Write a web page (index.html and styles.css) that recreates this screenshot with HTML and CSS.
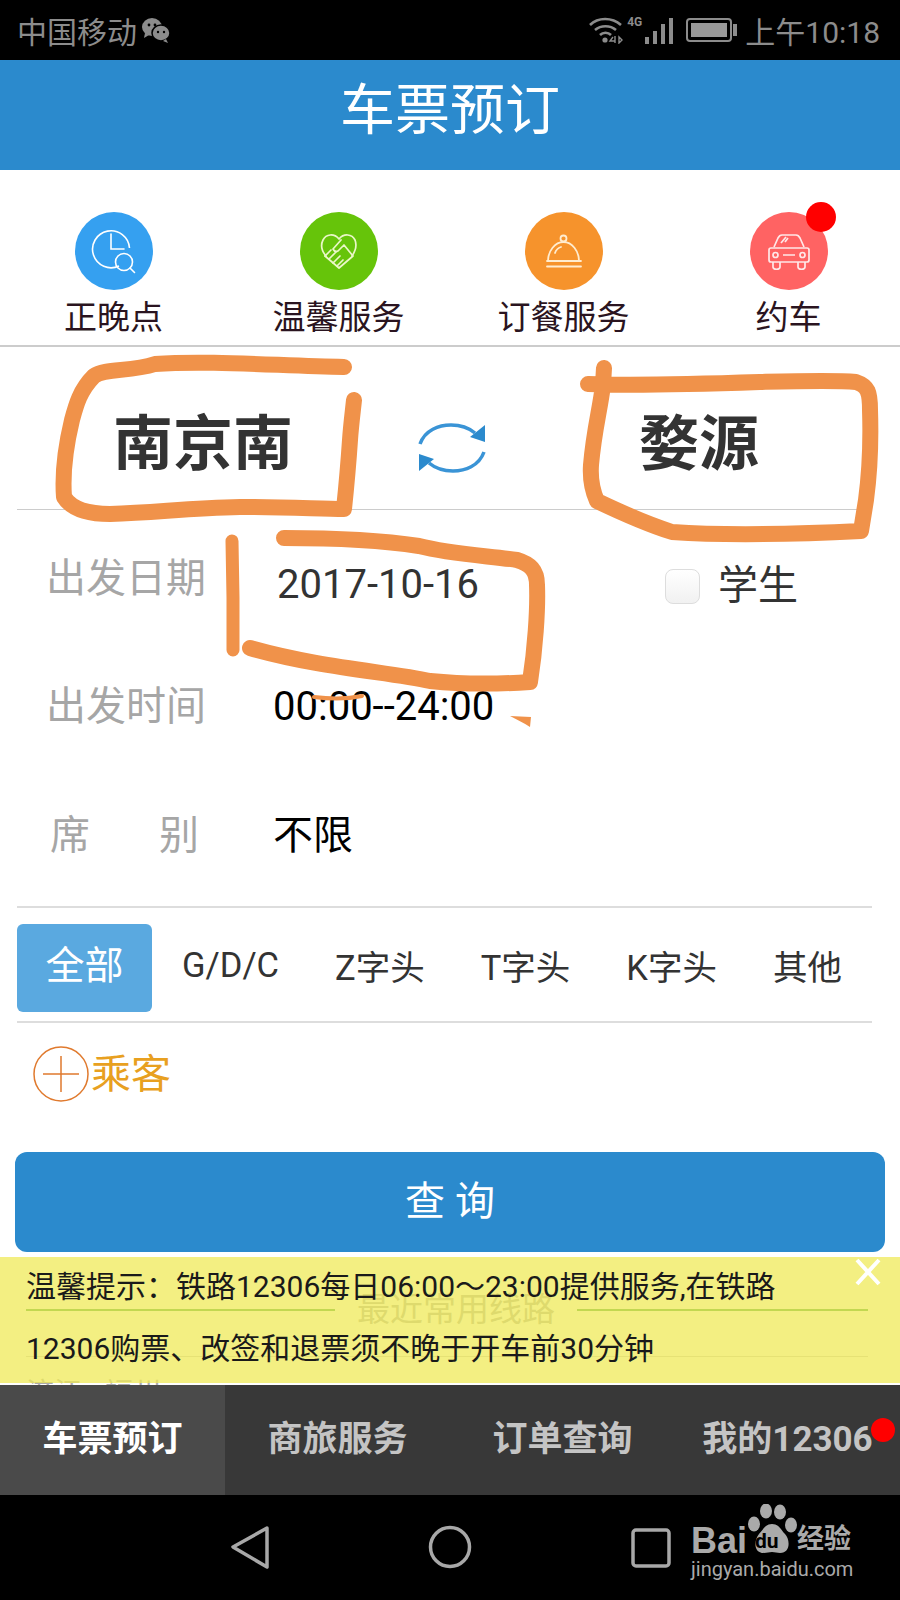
FILE: index.html
```html
<!DOCTYPE html>
<html lang="zh-CN">
<head>
    <meta charset="UTF-8">
    <meta name="viewport" content="width=device-width, initial-scale=1.0">
    <title>车票预订</title>
    <link rel="stylesheet" href="styles.css">
</head>
<body>
<div class="phone">
    <div class="status-bar">
        <div class="status-left">
            <span>中国移动</span>
            <svg class="wechat" width="30" height="26" viewBox="0 0 30 26">
                <ellipse cx="11" cy="10" rx="10" ry="9" fill="#8c8c8c"/>
                <path d="M4 16l-1 5 5-3z" fill="#8c8c8c"/>
                <ellipse cx="20" cy="16" rx="9" ry="8" fill="#8c8c8c" stroke="#000" stroke-width="1.5"/>
                <path d="M25 22l2 4-5-2z" fill="#8c8c8c"/>
                <circle cx="8" cy="8" r="1.4"/><circle cx="14" cy="8" r="1.4"/>
                <circle cx="17" cy="15" r="1.2"/><circle cx="23" cy="15" r="1.2"/>
            </svg>
        </div>
        <div class="status-right">
            <svg width="34" height="28" viewBox="0 0 34 28" fill="none" stroke="#8c8c8c" stroke-width="2.6">
                <path d="M1 9c8-8 22-8 31 0"/>
                <path d="M6 14c6-5 15-5 21 0"/>
                <path d="M11 19c3-3 8-3 11 0"/>
                <circle cx="16" cy="24" r="2.6" fill="#8c8c8c" stroke="none"/>
                <path d="M24 21l-3 4h5M26 20v7M30 21v6l3-3z" stroke-width="1.4"/>
            </svg>
            <div class="signal">
                <span class="signal-4g">4G</span>
                <i class="bar-1"></i><i class="bar-2"></i><i class="bar-3"></i><i class="bar-4"></i>
            </div>
            <div class="battery"><div class="battery-fill"></div></div>
            <span class="clock">上午10:18</span>
        </div>
    </div>

    <header class="title-bar">车票预订</header>

    <div class="content">
        <div class="services">
            <div class="service">
                <div class="service-icon icon-blue">
                    <svg width="78" height="78" viewBox="0 0 78 78" fill="none" stroke="#fff" stroke-width="1.6">
                        <path d="M44 54A18.5 18.5 0 1 1 54.500 36"/>
                        <path d="M36 22v15h13" stroke-linecap="round"/>
                        <circle cx="49" cy="50" r="8.500"/>
                        <path d="M55 56l4.500 4.500" stroke-linecap="round"/>
                    </svg>
                </div>
                <span>正晚点</span>
            </div>
            <div class="service">
                <div class="service-icon icon-green">
                    <svg width="78" height="78" viewBox="0 0 78 78" fill="none" stroke="#eaf7c8" stroke-width="1.7" stroke-linejoin="round" stroke-linecap="round">
                        <path d="M26 44C21 38 21 32 23 28C26 22 34 21 39 27C44 21 52 22 55 28C57 33 56 38 52 44"/>
                        <path d="M25 44l14 12 14-12-9-11-6 6c-2 1-4 0-5-2l8-9"/>
                        <path d="M25 44l6-6M29 47l7-7M33 51l7-7M37 54l6-6"/>
                    </svg>
                </div>
                <span>温馨服务</span>
            </div>
            <div class="service">
                <div class="service-icon icon-orange">
                    <svg width="78" height="78" viewBox="0 0 78 78" fill="none" stroke="#ffeccf" stroke-width="1.8" stroke-linecap="round">
                        <circle cx="38.500" cy="26.500" r="3"/>
                        <path d="M23 49c0-10 7-19 15.500-19S54 39 54 49"/>
                        <path d="M22 49h34M22 54.500h34"/>
                        <path d="M30 41c1-3 3-5 6-6"/>
                    </svg>
                </div>
                <span>订餐服务</span>
            </div>
            <div class="service">
                <div class="service-icon icon-red">
                    <svg width="78" height="78" viewBox="0 0 78 78" fill="none" stroke="#ffe8e8" stroke-width="1.7" stroke-linejoin="round">
                        <path d="M24 35l4-9c1-2 2-3 4-3h14c2 0 3 1 4 3l4 9"/>
                        <path d="M21 36h36c1.500 0 2 1 2 2v10c0 1-1 2-2 2H21c-1 0-2-1-2-2V38c0-1 .500-2 2-2z"/>
                        <path d="M23 50v5c0 3 7 3 7 0v-5M48 50v5c0 3 7 3 7 0v-5"/>
                        <circle cx="25.500" cy="43" r="2.500"/><circle cx="52.500" cy="43" r="2.500"/>
                        <path d="M33 43h12M31 31l5-6M35 30l3-4"/>
                    </svg>
                    <i class="badge badge-car"></i>
                </div>
                <span>约车</span>
            </div>
        </div>

        <div class="route">
            <div class="station station-from">南京南</div>
            <svg class="swap" width="70" height="52" viewBox="0 0 70 52" fill="none" stroke="#3a94d6" stroke-width="3.500">
                <path d="M3 22C8 8 22 3 34 3c11 0 18 3 24 8"/>
                <path d="M68 3v17l-15-5z" fill="#2b8acd" stroke="none"/>
                <path d="M67 30C62 44 48 49 36 49c-11 0-18-3-24-8"/>
                <path d="M2 49V32l15 5z" fill="#2b8acd" stroke="none"/>
            </svg>
            <div class="station station-to">婺源</div>
        </div>

        <div class="form-row row-date">
            <span class="form-label">出发日期</span>
            <span class="date-value">2017-10-16</span>
            <label class="student"><i class="checkbox"></i>学生</label>
        </div>
        <div class="form-row row-time">
            <span class="form-label">出发时间</span>
            <span class="form-value">00:00--24:00</span>
        </div>
        <div class="form-row row-seat">
            <span class="form-label label-spread"><b>席</b><b>别</b></span>
            <span class="form-value">不限</span>
        </div>

        <div class="train-types">
            <span class="type type-active">全部</span>
            <span class="type">G/D/C</span>
            <span class="type">Z字头</span>
            <span class="type">T字头</span>
            <span class="type">K字头</span>
            <span class="type">其他</span>
        </div>

        <div class="passenger">
            <svg width="56" height="56" viewBox="0 0 56 56" fill="none" stroke="#e07a2e" stroke-width="1.500">
                <circle cx="28" cy="28" r="27"/>
                <path d="M10 28h36M28 10v36"/>
            </svg>
            <span>乘客</span>
        </div>

        <button class="search-btn">查 询</button>

        <div class="recent">
            <div class="recent-title"><i></i><span>最近常用线路</span><i></i></div>
            <div class="recent-row"></div>
            <div class="recent-item">济江 福州</div>
        </div>

        <div class="notice">
            <p>温馨提示：铁路12306每日06:00～23:00提供服务,在铁路</p>
            <p>12306购票、改签和退票须不晚于开车前30分钟</p>
            <svg class="notice-close" width="28" height="28" viewBox="0 0 28 28" stroke="#fff" stroke-width="4">
                <path d="M3 2l22 24M25 2L3 26"/>
            </svg>
        </div>

        <!-- hand-drawn marks on top of the form -->
        <svg class="marks" width="900" height="600" viewBox="0 170 900 600" fill="none" stroke="#f0924a" stroke-width="16" stroke-linecap="round" stroke-linejoin="round">
            <path d="M344 367 C280 366 210 360 155 364 C130 372 105 368 94 376 C80 390 76 405 72 420 C66 445 62 470 64 497 C72 510 90 514 110 514 C160 512 190 508 240 507 C290 507 320 509 344 509 C346 490 348 470 350 440 C351 425 353 410 354 400"/>
            <path d="M588 384 C640 386 700 384 760 382 C800 381 835 380 856 382 C868 386 870 392 870 410 C871 440 870 470 866 500 L861 531 C800 534 730 536 672 532 C650 525 620 512 597 501 C592 490 590 480 591 465 C594 430 600 410 603 385 L604 368"/>
            <path d="M232 541 L233 598 L233 650" stroke-width="13"/>
            <path d="M284 538 C330 538 380 540 419 546 C450 554 490 556 517 560 C530 564 537 570 537 585 C538 610 535 650 530 682 C500 684 460 684 430 681 C390 672 320 668 250 648"/>
            <path d="M314 697 C330 699 348 699 362 696" stroke-width="4"/>
            <path d="M510 716 L531 717 L530 727 C524 723 516 719 510 716z" fill="#f0924a" stroke="none"/>
        </svg>
    </div>

    <nav class="tab-bar">
        <a class="tab tab-active">车票预订</a>
        <a class="tab">商旅服务</a>
        <a class="tab">订单查询</a>
        <a class="tab">我的12306<i class="badge badge-tab"></i></a>
    </nav>

    <div class="nav-bar">
        <svg width="900" height="105" viewBox="0 1495 900 105" fill="none" stroke="#a8a8a8" stroke-width="3.500" stroke-linejoin="round">
            <path d="M267 1528 L233 1547 L267 1567z"/>
            <circle cx="450" cy="1547" r="19.500"/>
            <rect x="633" y="1530" width="36" height="36" rx="3"/>
        </svg>
        <div class="baidu-mark">
            <div class="baidu-top">
                <span class="baidu-bai">Bai</span>
                <svg width="50" height="52" viewBox="0 0 50 52" fill="#aaa">
                    <ellipse cx="19" cy="7" rx="6" ry="7.500"/>
                    <ellipse cx="33" cy="8" rx="6" ry="7.500"/>
                    <ellipse cx="7" cy="20" rx="6" ry="7.500"/>
                    <ellipse cx="44" cy="21" rx="6" ry="7.500"/>
                    <path d="M25 20c7 0 9 6 13 10 5 5 6 19-5 19-3 0-5-1-8-1s-5 1-8 1C6 49 7 36 12 30c4-4 6-10 13-10z"/>
                </svg>
                <span class="baidu-du">du</span>
                <span class="baidu-cn">经验</span>
            </div>
            <div class="baidu-url">jingyan.baidu.com</div>
        </div>
    </div>
</div>
</body>
</html>
```

FILE: styles.css
```css
* {
    box-sizing: border-box;
}
body {
    margin: 0;
    font-family: Roboto, "Noto Sans CJK SC", sans-serif;
    background-color: #fff;
}
.phone {
    position: relative;
    display: flex;
    flex-direction: column;
    width: 900px;
    height: 1600px;
    overflow: hidden;
}

/* status bar */
.status-bar {
    display: flex;
    align-items: center;
    justify-content: space-between;
    height: 60px;
    padding: 0 20px 0 17px;
    background-color: #000;
    color: #8c8c8c;
    font-size: 30px;
}
.status-left, .status-right {
    display: flex;
    align-items: center;
}
.wechat {
    margin-left: 4px;
}
.signal {
    display: flex;
    align-items: flex-end;
    gap: 4px;
    height: 28px;
    margin-left: 4px;
}
.signal i {
    width: 4px;
    background-color: #8c8c8c;
}
.signal-4g {
    align-self: flex-start;
    margin-right: -1px;
    font-size: 12px;
    font-weight: 700;
    line-height: 12px;
}
.bar-1 { height: 7px; }
.bar-2 { height: 13px; }
.bar-3 { height: 20px; }
.bar-4 { height: 26px; }
.battery {
    position: relative;
    width: 46px;
    height: 24px;
    margin-left: 13px;
    padding: 3px;
    border: 2px solid #8c8c8c;
    border-radius: 4px;
}
.battery::after {
    content: "";
    position: absolute;
    top: 4px;
    right: -7px;
    width: 4px;
    height: 12px;
    background-color: #8c8c8c;
}
.battery-fill {
    width: 36px;
    height: 14px;
    background-color: #999;
}
.clock {
    margin-left: 13px;
}

.title-bar {
    height: 110px;
    background-color: #2b8acd;
    color: #fff;
    font-size: 55px;
    line-height: 100px;
    text-align: center;
}

.content {
    position: relative;
    flex: 1;
    overflow: hidden;
}

/* shortcuts row */
.services {
    display: grid;
    grid-template-columns: repeat(4, 225px);
    height: 177px;
    padding: 42px 0 0 1px;
    border-bottom: 2px solid #ccc;
}
.service {
    display: flex;
    flex-direction: column;
    align-items: center;
    color: #2a1420;
    font-size: 33px;
    line-height: 50px;
}
.service-icon {
    position: relative;
    width: 78px;
    height: 78px;
    margin-bottom: 3px;
    border-radius: 50%;
}
.service-icon svg {
    display: block;
}
.icon-blue { background-color: #35a0f0; }
.icon-green { background-color: #66c40a; }
.icon-orange { background-color: #f6932c; }
.icon-red { background-color: #ff6363; }
.badge {
    position: absolute;
    border-radius: 50%;
    background-color: #f00;
}
.badge-car {
    top: -10px;
    right: -8px;
    width: 30px;
    height: 30px;
}

/* from / to */
.route {
    display: flex;
    align-items: center;
    height: 163px;
    margin: 0 28px 0 17px;
    padding-top: 34px;
    border-bottom: 1px solid #ccc;
    color: #333;
    font-weight: 700;
}
.station {
    font-size: 60px;
    line-height: 70px;
}
.station-from {
    margin-left: 96px;
    width: 304px;
}
.station-to {
    margin-left: 152px;
}
.swap {
    margin-top: 6px;
}

/* form rows */
.form-row {
    display: flex;
    align-items: flex-start;
    padding-left: 46px;
    font-size: 40px;
    line-height: 50px;
}
.form-label {
    width: 227px;
    color: #a6a6a6;
}
.label-spread {
    display: flex;
    justify-content: space-between;
    width: 149px;
    margin: 0 74px 0 4px;
}
.label-spread b {
    font-weight: 400;
}
.form-value {
    color: #000;
}
.row-date {
    height: 132px;
    padding-top: 44px;
}
.row-time {
    height: 128px;
    padding-top: 40px;
}
.row-seat {
    height: 136px;
    padding-top: 41px;
}
.date-value {
    width: 388px;
    margin: 6px 0 0 4px;
    color: #333;
}
.student {
    display: flex;
    align-items: center;
    gap: 18px;
    margin-top: 7px;
    color: #333;
}
.checkbox {
    width: 35px;
    height: 35px;
    border: 1px solid #ddd;
    border-radius: 8px;
    background: linear-gradient(#fff, #f1f1f1);
}

/* train type filter */
.train-types {
    display: flex;
    align-items: center;
    gap: 56px;
    height: 117px;
    margin: 0 28px 0 17px;
    border-top: 2px solid #ddd;
    border-bottom: 2px solid #ddd;
    color: #333;
    font-size: 34.500px;
}
.type-active {
    width: 135px;
    height: 88px;
    margin: 6px -26px 0 0;
    border-radius: 6px;
    background-color: #5aa9e0;
    color: #fff;
    font-size: 39px;
    line-height: 84px;
    text-align: center;
}

.passenger {
    display: flex;
    align-items: center;
    gap: 2px;
    height: 129px;
    padding: 0 0 27px 33px;
    color: #e8a020;
    font-size: 40px;
}
.passenger span {
    margin-bottom: 6px;
}

.search-btn {
    display: block;
    width: 870px;
    height: 100px;
    margin-left: 15px;
    padding-bottom: 10px;
    border: none;
    border-radius: 12px;
    background-color: #2b8acd;
    color: #fff;
    font-family: inherit;
    font-size: 40px;
}

/* routes list, mostly hidden by the notice */
.recent {
    padding: 36px 32px 0 26px;
    color: #aaa;
}
.recent-title {
    display: flex;
    align-items: center;
    gap: 22px;
    font-size: 33px;
    line-height: 44px;
}
.recent-title i {
    flex: 1;
    height: 2px;
    background-color: #3fa03f;
}
.recent-title i:first-child {
    flex: none;
    width: 309px;
}
.recent-row {
    height: 1px;
    margin-top: 24px;
    background-color: #ccc;
}
.recent-item {
    margin-top: 14px;
    font-size: 28px;
    word-spacing: 16px;
}
.notice {
    position: absolute;
    top: 1087px;
    left: 0;
    width: 900px;
    height: 126px;
    padding: 8px 0 0 26px;
    background-color: rgba(239, 234, 88, 0.75);
    color: #1a1a1a;
    font-size: 30px;
}
.notice p {
    margin: 0;
    height: 62px;
    line-height: 44px;
    white-space: nowrap;
}
.notice-close {
    position: absolute;
    top: 1px;
    right: 18px;
}
.marks {
    position: absolute;
    top: 0;
    left: 0;
    pointer-events: none;
}

/* bottom tabs */
.tab-bar {
    display: grid;
    grid-template-columns: repeat(4, 225px);
    height: 110px;
    background-color: #383838;
    color: #c4c4c4;
    font-size: 35px;
    font-weight: 700;
    line-height: 110px;
    text-align: center;
}
.tab {
    position: relative;
}
.tab-active {
    background-color: #4a4a4a;
    color: #fff;
}
.badge-tab {
    top: 33px;
    right: 5px;
    width: 24px;
    height: 24px;
}

.nav-bar {
    position: relative;
    height: 105px;
    background-color: #000;
}
.nav-bar svg {
    display: block;
}
.baidu-mark {
    position: absolute;
    top: 9px;
    left: 691px;
    color: #aaa;
}
.baidu-top {
    display: flex;
    align-items: flex-end;
    position: relative;
    height: 52px;
}
.baidu-bai {
    font-family: "Liberation Sans", sans-serif;
    font-size: 36px;
    font-weight: 700;
    line-height: 30px;
}
.baidu-du {
    position: absolute;
    left: 64px;
    top: 27px;
    color: #000;
    font-size: 21px;
    font-weight: 700;
    line-height: 20px;
}
.baidu-cn {
    font-size: 27px;
    font-weight: 700;
    line-height: 34px;
}
.baidu-url {
    font-size: 20px;
    line-height: 26px;
    white-space: nowrap;
}
```
